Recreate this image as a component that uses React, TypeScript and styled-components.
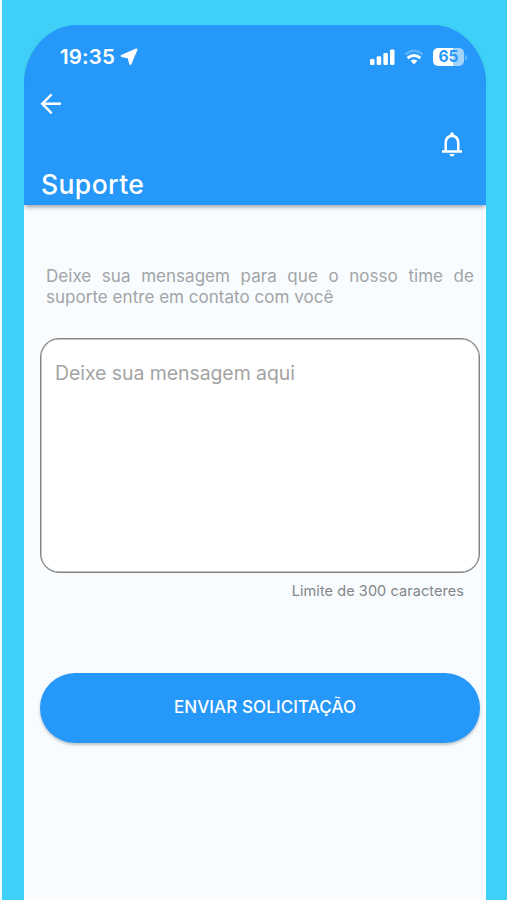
import React from 'react';
import styled, { createGlobalStyle } from 'styled-components';

const GlobalStyle = createGlobalStyle`
  * { box-sizing: border-box; }
  body { margin: 0; background: #3ed0f6; font-family: Inter, "Liberation Sans", sans-serif; }
`;

const Stage = styled.div`
  height: 900px;
  overflow: hidden;
  padding: 25px 21px 0 22px;
  border-left: 2px solid #f3fcff;
  background: #3ed0f6;
`;

const Phone = styled.main`
  height: 875px;
  background: linear-gradient(#2698fa 120px, #f8fcff 120px);
  border-radius: 54px 54px 0 0 / 60px 60px 0 0;
`;

const Header = styled.header`
  display: flex;
  flex-direction: column;
  height: 180px;
  color: #fff;
  background: #2698fa;
  border-radius: inherit;
  box-shadow: 0 3px 4px -1px rgba(60, 70, 80, 0.5);
  clip-path: inset(0 0 -12px 0);
`;

const StatusBar = styled.div`
  display: flex;
  align-items: center;
  justify-content: space-between;
  height: 24px;
  margin-top: 20px;
  padding: 0 19px 0 36px;
`;

const Clock = styled.div`
  display: flex;
  align-items: center;
  gap: 5px;
  font-size: 20.5px;
  font-weight: 600;
  line-height: 24px;
  letter-spacing: 0.15px;
`;

const StatusIcons = styled.div`
  display: flex;
  align-items: center;
  height: 24px;
`;

const Battery = styled.div`
  display: flex;
  align-items: center;
  margin-left: 9px;
`;

const BatteryLevel = styled.div<{ $level: number }>`
  width: 31px;
  height: 18px;
  border-radius: 5px;
  color: #2698fa;
  background: linear-gradient(90deg, #fff ${p => p.$level}%, #a3d3fc ${p => p.$level}%);
  font-size: 15.5px;
  font-weight: 700;
  line-height: 18px;
  text-align: center;
`;

const BatteryTip = styled.div`
  width: 2px;
  height: 5px;
  margin-left: 1px;
  border-radius: 0 2px 2px 0;
  background: #6bb8fb;
`;

const IconButton = styled.button<{ $end?: boolean }>`
  display: flex;
  align-self: ${p => (p.$end ? 'flex-end' : 'flex-start')};
  margin: ${p => (p.$end ? '11px 19px 0 0' : '21px 0 0 13px')};
  padding: 0;
  border: 0;
  color: inherit;
  background: none;
`;

const Title = styled.h1`
  margin: 8px 0 0 17px;
  font-size: 26.5px;
  font-weight: 500;
  line-height: 34px;
  letter-spacing: 0.4px;
`;

const Content = styled.div`
  display: flex;
  flex-direction: column;
  padding: 61px 6px 0 16px;
`;

const Intro = styled.p`
  margin: 0 6px 30px;
  color: #a2a4a6;
  font-size: 17px;
  line-height: 21px;
  letter-spacing: 0.03px;
  text-align: justify;
`;

const Message = styled.textarea`
  display: block;
  width: 440px;
  height: 235px;
  padding: 22px 14px;
  border: 1px solid #858587;
  border-radius: 19px;
  outline: 0;
  resize: none;
  background: #fff;
  box-shadow: inset 0 0 0 0.5px #858587;
  font: 400 19.5px/25px Inter, sans-serif;
  letter-spacing: -0.08px;
  &::placeholder { color: #a4a4a4; opacity: 1; }
`;

const Limit = styled.div`
  align-self: flex-end;
  margin: 8px 16px 0 0;
  color: #838688;
  font-size: 14.5px;
  line-height: 20px;
  letter-spacing: 0.07px;
`;

const Submit = styled.button`
  width: 440px;
  height: 70px;
  margin-top: 72px;
  padding: 0 0 2px 10px;
  border: 0;
  border-radius: 35px;
  color: #fff;
  background: #2698fa;
  box-shadow: 0 2px 3px rgba(40, 60, 80, 0.3);
  font: 500 17px/24px Inter, sans-serif;
  letter-spacing: 0.1px;
`;

const WifiGlyph = styled.svg`
  margin-left: 9px;
`;

function LocationIcon() {
  return (
    <svg width="18" height="18" viewBox="0 0 17 17">
      <path d="M15.5 1.5 9.8 15 8.2 9 1.6 7.6Z" fill="#fff" stroke="#fff" strokeWidth="2" strokeLinejoin="round" />
    </svg>
  );
}

function SignalIcon() {
  return (
    <svg width="25" height="16" viewBox="0 0 25 16" fill="#fff">
      <rect x="0" y="10" width="4.5" height="6" rx="1.2" />
      <rect x="6.7" y="7.3" width="4.5" height="8.7" rx="1.2" />
      <rect x="13.4" y="4" width="4.5" height="12" rx="1.2" />
      <rect x="20" y="0.5" width="4.5" height="15.5" rx="1.2" />
    </svg>
  );
}

function WifiIcon() {
  return (
    <WifiGlyph width="20" height="16" viewBox="0 0 20 16" fill="none" stroke="#fff">
      <path d="M1.2 5.6Q10-2.3 18.8 5.6" strokeWidth="2.4" opacity=".25" />
      <path d="M3.6 9.2Q10 3.7 16.4 9.2" strokeWidth="3" />
      <path d="M6.6 11.8Q10 9 13.4 11.8L10 15.4Z" fill="#fff" stroke="none" />
    </WifiGlyph>
  );
}

function BackIcon() {
  return (
    <svg width="28" height="28" viewBox="0 0 28 28" fill="none" stroke="#fff" strokeWidth="2.4" strokeLinecap="round">
      <path d="M23 13.8H5.5M14 5 5.2 13.8l8.8 8.8" />
    </svg>
  );
}

function BellIcon() {
  return (
    <svg width="30" height="30" viewBox="0 0 24 24" fill="#fff">
      <path d="M12 22c1.1 0 2-.9 2-2h-4c0 1.1.9 2 2 2Zm6-5v-6c0-3.07-1.63-5.64-4.5-6.32V4c0-.83-.67-1.5-1.5-1.5s-1.5.67-1.5 1.5v.68C7.64 5.36 6 7.92 6 11v6H4v2h16v-2h-2Zm-2 0H8v-6c0-2.48 1.51-4.5 4-4.5s4 2.02 4 4.5v6Z" />
    </svg>
  );
}

export default function App() {
  return (
    <>
      <GlobalStyle />
      <Stage>
        <Phone>
          <Header>
            <StatusBar>
              <Clock>19:35 <LocationIcon /></Clock>
              <StatusIcons>
                <SignalIcon />
                <WifiIcon />
                <Battery>
                  <BatteryLevel $level={65}>65</BatteryLevel>
                  <BatteryTip />
                </Battery>
              </StatusIcons>
            </StatusBar>
            <IconButton aria-label="Voltar"><BackIcon /></IconButton>
            <IconButton $end aria-label="Notificações"><BellIcon /></IconButton>
            <Title>Suporte</Title>
          </Header>
          <Content>
            <Intro>Deixe sua mensagem para que o nosso time de suporte entre em contato com você</Intro>
            <Message placeholder="Deixe sua mensagem aqui" maxLength={300} />
            <Limit>Limite de 300 caracteres</Limit>
            <Submit>ENVIAR SOLICITAÇÃO</Submit>
          </Content>
        </Phone>
      </Stage>
    </>
  );
}
